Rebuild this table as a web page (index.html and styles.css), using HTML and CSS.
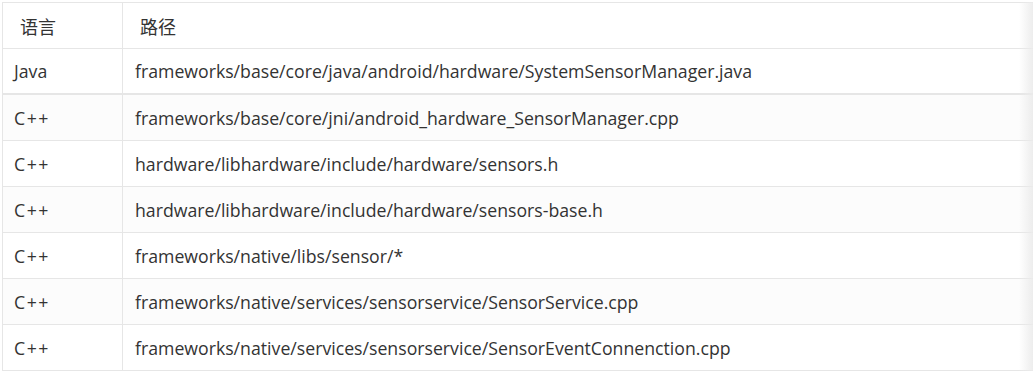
FILE: index.html
```html
<!DOCTYPE html>
<html lang="zh">
<head>
<meta charset="utf-8">
<link rel="stylesheet" href="styles.css">
</head>
<body>
<div class="wrap">
  <table class="tbl">
    <thead>
      <tr><th class="c1">语言</th><th class="c2">路径</th></tr>
    </thead>
    <tbody>
      <tr class="thick"><td>Java</td><td>frameworks/base/core/java/android/hardware/SystemSensorManager.java</td></tr>
      <tr><td class="lang">C++</td><td>frameworks/base/core/jni/android_hardware_SensorManager.cpp</td></tr>
      <tr><td class="lang">C++</td><td>hardware/libhardware/include/hardware/sensors.h</td></tr>
      <tr><td class="lang">C++</td><td>hardware/libhardware/include/hardware/sensors-base.h</td></tr>
      <tr><td class="lang">C++</td><td>frameworks/native/libs/sensor/*</td></tr>
      <tr><td class="lang">C++</td><td>frameworks/native/services/sensorservice/SensorService.cpp</td></tr>
      <tr><td class="lang">C++</td><td>frameworks/native/services/sensorservice/SensorEventConnenction.cpp</td></tr>
    </tbody>
  </table>
  <div class="fade"></div>
</div>
</body>
</html>
```

FILE: styles.css
```css
html, body {
  margin: 0;
  padding: 0;
  background: #ffffff;
}
body {
  padding: 2px 0 0 2px;
  font-family: "Open Sans", "Noto Sans CJK SC", sans-serif;
  font-size: 17.7px;
  color: #333333;
  overflow: hidden;
}
.wrap {
  position: relative;
  width: 1031px;
  overflow: hidden;
}
.tbl {
  border-collapse: collapse;
  width: 1100px;
  table-layout: fixed;
}
.tbl th, .tbl td {
  border: 1px solid #e6e6e6;
  height: 45px;
  padding: 0 12px 0 11px;
  text-align: left;
  font-weight: normal;
  white-space: nowrap;
  line-height: 20px;
}
.tbl td + td { padding-left: 12px; }
.tbl .lang { letter-spacing: 1.5px; }
.tbl th {
  padding-left: 17px;
  font-family: "Noto Sans CJK SC", sans-serif;
  font-size: 18px;
}
.tbl .c1 { width: 120px; box-sizing: border-box; }
.tbl tbody tr:nth-child(even) td { background: #fcfcfc; }
.tbl tr.thick td { border-bottom: 2px solid #e6e6e6; height: 44px; }
.fade {
  position: absolute;
  top: 0;
  right: 0;
  width: 14px;
  height: 100%;
  background: linear-gradient(to right, rgba(240,240,240,0), rgba(235,235,235,0.9));
}
```
